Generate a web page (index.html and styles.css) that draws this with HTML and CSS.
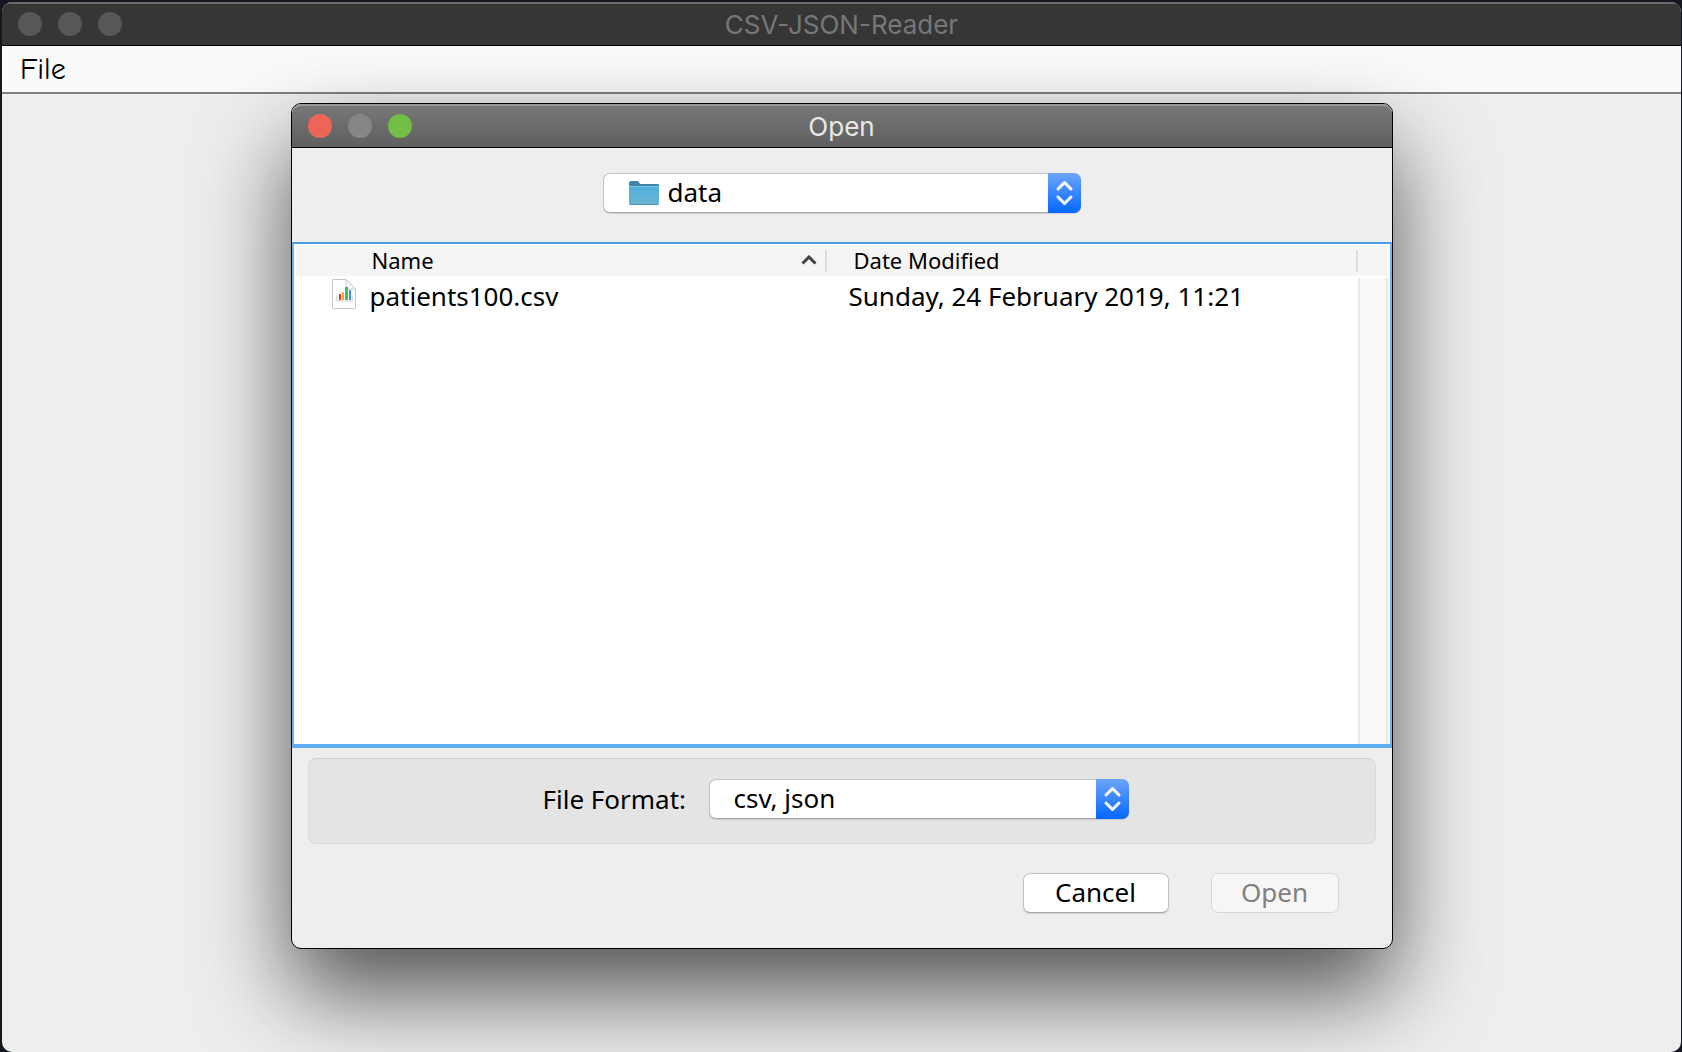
FILE: index.html
```html
<!DOCTYPE html>
<html lang="en">
<head>
<meta charset="utf-8">
<title>CSV-JSON-Reader</title>
<link rel="stylesheet" href="styles.css">
</head>
<body>
<div class="window">
  <header class="titlebar titlebar-inactive">
    <span class="lights"><i class="light"></i><i class="light"></i><i class="light"></i></span>
    <h1 class="title">CSV-JSON-Reader</h1>
  </header>
  <nav class="menubar"><button class="menu" type="button">File</button></nav>
  <main class="workspace">
    <section class="dialog" role="dialog" aria-labelledby="dialog-title">
      <header class="titlebar titlebar-active">
        <span class="lights"><i class="light light-close"></i><i class="light light-min"></i><i class="light light-zoom"></i></span>
        <h2 class="title" id="dialog-title">Open</h2>
      </header>

      <div class="location">
        <div class="combo combo-folder">
          <select class="select" aria-label="Folder"><option>data</option></select>
          <svg class="folder" viewBox="0 0 30 25" aria-hidden="true">
            <defs><linearGradient id="folder-fill" x1="0" y1="0" x2="0" y2="1"><stop offset="0" stop-color="#4fb0de"/><stop offset="1" stop-color="#6cb5d6"/></linearGradient></defs>
            <path d="M0 2Q0 0 2 0H8Q9 0 10 1L11 3H29Q30 3 30 4V8H0Z" fill="#3f85a6"/>
            <rect y="5" width="30" height="19" rx="1" fill="url(#folder-fill)"/>
            <path d="M0 5.500H30" stroke="#7cc8ea"/>
            <path d="M1 23.500H29" stroke="#4a93b4"/>
          </svg>
          <svg class="stepper" viewBox="0 0 33 40" aria-hidden="true"><path d="M10 16l6.500-6.500 6.500 6.500M10 24l6.500 6.500 6.500-6.500"/></svg>
        </div>
      </div>

      <div class="files">
        <table class="table">
          <colgroup><col class="col-name"><col></colgroup>
          <thead>
            <tr>
              <th class="head head-name" scope="col" aria-sort="ascending"><span class="head-inner">Name
                <svg class="sort" viewBox="0 0 16 10" aria-hidden="true"><path d="M1.500 8.500L8 2l6.500 6.500"/></svg></span></th>
              <th class="head head-date" scope="col">Date Modified</th>
            </tr>
          </thead>
          <tbody>
            <tr>
              <td class="cell cell-name"><span class="file">
                <svg class="doc" viewBox="0 0 26 32" aria-hidden="true">
                  <path d="M1.500 1.500H15L24.500 11V30.500H1.500Z" fill="#fff" stroke="#c6c6c6"/>
                  <path d="M15 1.500V9Q15 11 17 11H24.500Z" fill="#fafafa" stroke="#cecece"/>
                  <path d="M6 17L5 23H22L21 17" fill="#f6f6f6" stroke="#d4d4d4"/>
                  <rect x="8" y="16" width="2" height="6" fill="#e8332c"/>
                  <rect x="11" y="14" width="2" height="8" fill="#f8a33a"/>
                  <rect x="14" y="9" width="3" height="13" fill="#35c455"/>
                  <rect x="18" y="12" width="2" height="10" fill="#3c93f2"/>
                </svg>patients100.csv</span></td>
              <td class="cell cell-date">Sunday, 24 February 2019, 11:21</td>
            </tr>
          </tbody>
        </table>
        <div class="gutter"><div class="gutter-head"></div><div class="track"></div></div>
      </div>

      <div class="format">
        <label class="label" for="format">File Format:</label>
        <div class="combo combo-format">
          <select class="select" id="format"><option>csv, json</option></select>
          <svg class="stepper" viewBox="0 0 33 40" aria-hidden="true"><path d="M10 16l6.500-6.500 6.500 6.500M10 24l6.500 6.500 6.500-6.500"/></svg>
        </div>
      </div>

      <footer class="actions">
        <button class="button button-cancel" type="button">Cancel</button>
        <button class="button button-open" type="button" disabled>Open</button>
      </footer>
    </section>
  </main>
</div>
</body>
</html>
```
FILE: styles.css
```css
* {
  box-sizing: border-box;
}

body {
  margin: 0;
  background: #14171f;
  color: #000;
  font: 26px/32px "Noto Sans", "Open Sans", sans-serif;
}

.window {
  display: flex;
  flex-direction: column;
  min-height: calc(100vh - 2px);
  margin: 2px 1px 0 2px;
  overflow: hidden;
  border-radius: 10px;
  background: #eee;
}

/* Title bars */
.titlebar {
  display: grid;
  grid-template-columns: 1fr auto 1fr;
  align-items: center;
  height: 44px;
  padding: 0 16px;
  border-bottom: 1px solid #000;
}

.titlebar-inactive {
  background: #363636;
  box-shadow: inset 0 2px #6b6b69;
  color: #777;
}

.titlebar-active {
  border-radius: 9px 9px 0 0;
  background: linear-gradient(#787878, #5f5f5f);
  box-shadow: inset 0 2px #989898;
  color: #e8e8e8;
}

.title {
  margin: 0;
  padding-top: 2px;
  font: 400 26px/32px Inter, Roboto, sans-serif;
}

.lights {
  display: flex;
  gap: 16px;
}

.light {
  width: 24px;
  height: 24px;
  border-radius: 50%;
  background: #575757;
}

.light-close { background: #ed6559; }
.light-min { background: #868686; }
.light-zoom { background: #72be47; }

/* Menu bar */
.menubar {
  height: 48px;
  padding: 7px 18px;
  border-bottom: 2px solid #808080;
  background: #fafafa;
}

.menu {
  padding: 0;
  border: 0;
  background: none;
  color: #000;
  font: 500 30px/32px "Comic Sans MS", "Comic Neue", Lato, sans-serif;
}

/* Dialog */
.workspace {
  display: flex;
  flex: 1;
  justify-content: center;
  padding: 9px 0 103px;
}

.dialog {
  position: relative;
  display: flex;
  flex-direction: column;
  width: 66%;
  max-width: 1102px;
  border: 1px solid #000;
  border-radius: 10px;
  background: #eee;
  box-shadow: 0 44px 92px rgba(0, 0, 0, 0.66);
}

.location {
  display: flex;
  justify-content: center;
  padding: 25px 0 29px;
}

/* Drop-downs */
.combo {
  display: grid;
  align-items: center;
}

.combo > * {
  grid-area: 1 / 1;
}

.combo-folder { width: 478px; }
.combo-format { width: 420px; }

.select {
  width: 100%;
  height: 40px;
  padding: 0 48px 2px 24px;
  border: 1px solid #c4c4c4;
  border-bottom-color: #a8a8a8;
  border-radius: 7px;
  appearance: none;
  background: #fff;
  box-shadow: 0 1px 1px rgba(0, 0, 0, 0.12);
  color: #000;
  font: inherit;
}

.combo-folder .select {
  padding-left: 64px;
}

.folder {
  width: 30px;
  height: 25px;
  margin-left: 26px;
  pointer-events: none;
}

.stepper {
  justify-self: end;
  width: 33px;
  height: 40px;
  border-radius: 0 7px 7px 0;
  background: linear-gradient(#6ca5fb, #0468ff);
  fill: none;
  stroke: #fff;
  stroke-width: 3;
  stroke-linecap: round;
  stroke-linejoin: round;
  pointer-events: none;
}

/* File list */
.files {
  display: flex;
  flex: 1;
  align-items: flex-start;
  min-height: 200px;
  padding: 2px 2px 0;
  border: 2px solid #6cb4f2;
  border-top-color: #4a9be0;
  border-bottom: 4px solid #60aff2;
  background: #fff;
}

.table {
  flex: 1;
  border-collapse: collapse;
  table-layout: fixed;
}

.col-name { width: 50%; }

.head {
  height: 30px;
  padding: 0;
  background: linear-gradient(#dcdcdc, #dcdcdc) right center / 2px 22px no-repeat #f5f5f5;
  font-size: 22px;
  font-weight: 400;
  line-height: 28px;
  padding-bottom: 2px;
  text-align: left;
}

.head-name { padding-left: 76px; }
.head-date { padding-left: 27px; }

.head-inner {
  display: flex;
  align-items: center;
  justify-content: space-between;
  padding-right: 10px;
}

.sort {
  width: 16px;
  height: 10px;
  fill: none;
  stroke: #444;
  stroke-width: 3;
}

.cell {
  padding: 2px 0;
  font-size: 26px;
  line-height: 36px;
}

.cell-name { padding-left: 35px; }
.cell-date { padding-left: 22px; }

.file {
  display: flex;
  gap: 13px;
}

.doc {
  width: 26px;
  height: 32px;
}

.gutter {
  display: flex;
  flex-direction: column;
  align-self: stretch;
  gap: 2px;
  width: 30px;
}

.gutter-head {
  height: 30px;
  background: #f5f5f5;
}

.track {
  flex: 1;
  border: solid #e8e8e8;
  border-width: 0 2px;
  background: #fafafa;
}

/* Format row and buttons */
.format {
  display: flex;
  gap: 18px;
  align-items: center;
  justify-content: center;
  height: 86px;
  margin: 10px 16px 0;
  padding: 0 12px 4px 0;
  border: 1px solid #dadada;
  border-top-color: #d0d0d0;
  border-radius: 8px;
  background: #e4e4e4;
}

.label {
  min-width: 148px;
  white-space: nowrap;
}

.actions {
  display: flex;
  gap: 42px;
  justify-content: flex-end;
  padding: 29px 53px 35px;
}

.button {
  height: 40px;
  padding: 0 0 2px;
  border: 1px solid #c4c4c4;
  border-bottom-color: #a8a8a8;
  border-radius: 7px;
  background: #fff;
  box-shadow: 0 1px 1px rgba(0, 0, 0, 0.12);
  color: #000;
  font: inherit;
}

.button-cancel { width: 146px; }

.button-open {
  width: 128px;
  border-color: #d8d8d8;
  background: #f6f6f6;
  box-shadow: none;
  color: #808080;
}
```
